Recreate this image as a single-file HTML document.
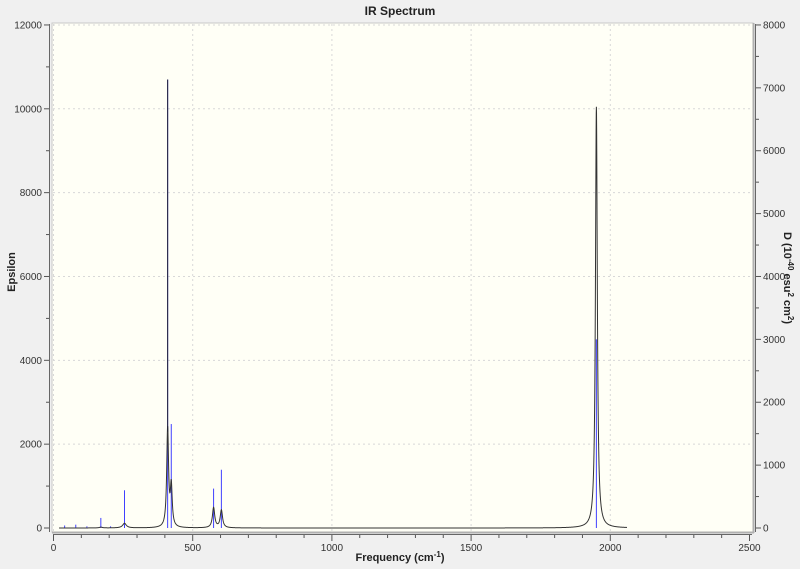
<!DOCTYPE html>
<html><head><meta charset="utf-8"><style>
html,body{margin:0;padding:0;background:#f0f0f0;}
svg{display:block;font-family:"Liberation Sans",sans-serif;}
</style></head><body>
<svg id="s" width="800" height="569" viewBox="0 0 800 569" xmlns="http://www.w3.org/2000/svg">
<rect width="800" height="569" fill="#f0f0f0"/>
<text x="400" y="15" text-anchor="middle" font-size="12" font-weight="bold" fill="#222">IR Spectrum</text>
<rect x="52" y="23" width="701" height="509" fill="#fffff6" stroke="#c8c8c8" stroke-width="1"/>
<line x1="52" y1="532.5" x2="754" y2="532.5" stroke="#b0b0b0" stroke-width="2"/>
<line x1="753.5" y1="23" x2="753.5" y2="533" stroke="#b0b0b0" stroke-width="2"/>
<g id="grid" stroke="#d8d8d8" stroke-dasharray="2,3" stroke-width="1"></g>
<line x1="49.5" y1="24" x2="49.5" y2="532" stroke="#666"/>
<line x1="755.5" y1="24" x2="755.5" y2="532" stroke="#666"/>
<line x1="53" y1="534.5" x2="752" y2="534.5" stroke="#666"/>
<g id="ax" stroke="#555" stroke-width="1"></g>
<g id="lab" font-size="10" fill="#333"></g>
<g id="sticks" stroke="#4040ff" stroke-width="1"></g>
<path id="curve" fill="none" stroke="#333" stroke-width="1"/>
<line id="dk" stroke="#223" stroke-width="1"/>
<text x="400" y="561" text-anchor="middle" font-size="11" font-weight="bold" fill="#222">Frequency (cm<tspan dy="-4" font-size="8">-1</tspan><tspan dy="4">)</tspan></text>
<text transform="translate(15,272) rotate(-90)" text-anchor="middle" font-size="11" font-weight="bold" fill="#222">Epsilon</text>
<text transform="translate(784,278) rotate(90)" text-anchor="middle" font-size="11" font-weight="bold" fill="#222">D (10<tspan dy="-4" font-size="8">-40</tspan><tspan dy="4"> esu</tspan><tspan dy="-4" font-size="8">2</tspan><tspan dy="4"> cm</tspan><tspan dy="-4" font-size="8">2</tspan><tspan dy="4">)</tspan></text>
</svg>
<script>
var NS="http://www.w3.org/2000/svg";
function X(f){return 53.5+f*0.2784;}
function Y(e){return 528-e*0.04192;}
function el(p,t,a,txt){var e=document.createElementNS(NS,t);for(var k in a)e.setAttribute(k,a[k]);if(txt!=null)e.textContent=txt;document.getElementById(p).appendChild(e);}
for(var f=500;f<2500;f+=500)el("grid","line",{x1:X(f),y1:24,x2:X(f),y2:531});
for(var e=2000;e<=12000;e+=2000)el("grid","line",{x1:53,y1:Y(e),x2:752,y2:Y(e)});
el("grid","line",{x1:X(0),y1:24,x2:X(0),y2:531});
for(var e=0;e<=12000;e+=1000){var y=Y(e),big=e%2000==0;el("ax","line",{x1:big?44:46,y1:y,x2:49,y2:y});if(big)el("lab","text",{x:42,y:y+3.5,"text-anchor":"end"},e);}
for(var d=0;d<=8000;d+=500){var y=528-d*0.06288,big=d%1000==0;el("ax","line",{x1:756,y1:y,x2:big?761:759,y2:y});if(big)el("lab","text",{x:763,y:y+3.5},d);}
for(var f=0;f<=2500;f+=100){var x=X(f),big=f%500==0;el("ax","line",{x1:x,y1:535,x2:x,y2:big?541:538});if(big)el("lab","text",{x:x,y:551,"text-anchor":"middle"},f);}
var st=[[40,60],[80,80],[120,40],[170,240],[205,40],[255,900],[410,10700],[423,2480],[575,940],[603,1390],[1950,4500]];
st.forEach(function(s){el("sticks","line",{x1:X(s[0]),y1:528,x2:X(s[0]),y2:Y(s[1])});});
var pk=[[410,2350,4],[423,950,4],[575,480,5],[603,420,5],[255,110,8],[1950,10050,4],[170,20,6]];
var d="";for(var f=20;f<=2060;f+=0.5){var v=0;pk.forEach(function(p){var u=(f-p[0])/p[2];v+=p[1]/(1+u*u);});d+=(d?"L":"M")+X(f).toFixed(2)+","+Y(v).toFixed(2);}
document.getElementById("curve").setAttribute("d",d);
var dk=document.getElementById("dk");dk.setAttribute("x1",X(410));dk.setAttribute("x2",X(410));dk.setAttribute("y1",Y(10700));dk.setAttribute("y2",Y(2300));
</script>
</body></html>
